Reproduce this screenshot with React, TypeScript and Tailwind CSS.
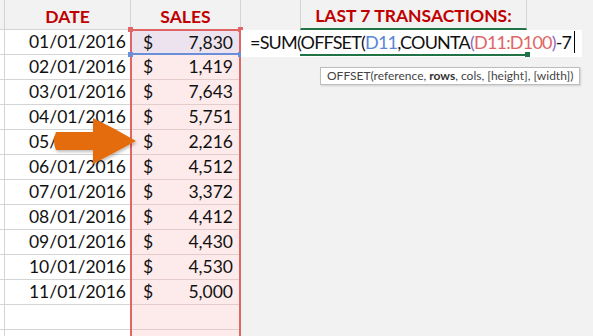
import clsx from 'clsx'

const rows = [
  { date: '01/01/2016', sales: '7,830' },
  { date: '02/01/2016', sales: '1,419' },
  { date: '03/01/2016', sales: '7,643' },
  { date: '04/01/2016', sales: '5,751' },
  { date: '05/01/2016', sales: '2,216' },
  { date: '06/01/2016', sales: '4,512' },
  { date: '07/01/2016', sales: '3,372' },
  { date: '08/01/2016', sales: '4,412' },
  { date: '09/01/2016', sales: '4,430' },
  { date: '10/01/2016', sales: '4,530' },
  { date: '11/01/2016', sales: '5,000' },
  { date: '', sales: '' },
  { date: '', sales: '' },
]

const Arrow = () => (
  <svg className="absolute left-0 top-[110px]" width="150" height="64" viewBox="0 110 150 64">
    <defs>
      <filter id="sh" x="-10%" y="-10%" width="130%" height="140%">
        <feDropShadow dx="1" dy="2" stdDeviation="1.5" floodColor="#000" floodOpacity="0.25" />
      </filter>
    </defs>
    <path
      d="M56,132 L93,132 L93,118 Q114,128 136,141 Q114,153 93,164 L93,150 L56,150 Q52,141 56,132 Z"
      fill="#e46c0a"
      filter="url(#sh)"
    />
  </svg>
)

const App = () => {
  return (
    <div className="relative flex w-[593px] h-[336px] overflow-hidden bg-[#f2f2f2] font-['Lato',sans-serif] text-[17.5px] text-[#111]">
      {/* row header edge */}
      <div className="w-[5px] shrink-0 flex flex-col border-r border-[#d4d4d4]">
        <div className="h-[30px] shrink-0 border-b border-[#d4d4d4]" />
        {rows.map((_, i) => (
          <div key={i} className="h-[25px] shrink-0 bg-white border-b border-[#d4d4d4]" />
        ))}
      </div>

      {/* date column */}
      <div className="w-[125px] shrink-0 flex flex-col">
        <div className="h-[30px] shrink-0 border-b border-[#d4d4d4] flex items-center justify-center font-bold text-[#c00000] pt-[5px]">
          DATE
        </div>
        {rows.map((r, i) => (
          <div
            key={i}
            className="h-[25px] shrink-0 bg-white border-b border-[#d4d4d4] text-right pr-[4px] leading-[24px]"
          >
            {r.date}
          </div>
        ))}
      </div>

      {/* sales column */}
      <div className="w-[111px] shrink-0 flex flex-col">
        <div className="h-[29px] shrink-0 border-x border-[#d4d4d4] flex items-center justify-center font-bold text-[#c00000] pt-[6px]">
          SALES
        </div>
        <div className="relative flex-1 border-x-2 border-t-2 border-[#e06666] bg-[#fdeaea]">
          {rows.map((r, i) => (
            <div
              key={i}
              className={clsx(
                'flex justify-between pl-[11px] pr-[6px] leading-[24px]',
                i === 0 ? 'h-[24px] bg-[#ece3ee] border-b-2 border-[#6a8ed8] leading-[22px]' : 'h-[25px] border-b border-[#e5cccc]',
              )}
            >
              <span>{r.sales ? '$' : ''}</span>
              <span>{r.sales}</span>
            </div>
          ))}
          <div className="absolute -left-[4px] -top-[4px] w-[5px] h-[5px] bg-[#e06666]" />
          <div className="absolute -right-[4px] -top-[4px] w-[5px] h-[5px] bg-[#e06666]" />
          <div className="absolute -left-[4px] top-[21px] w-[5px] h-[5px] bg-[#6a8ed8]" />
          <div className="absolute -right-[4px] top-[21px] w-[5px] h-[5px] bg-[#6a8ed8]" />
        </div>
      </div>

      {/* right area */}
      <div className="relative flex-1 flex flex-col">
        <div className="h-[30px] shrink-0 flex">
          <div className="ml-[59px] w-[227px] h-[30px] border-x border-[#d4d4d4] border-b-2 border-b-[#217346] flex items-center justify-center font-bold text-[#c00000] pt-[4px]">
            LAST 7 TRANSACTIONS:
          </div>
        </div>
        <div className="relative w-[341px] h-[27px] bg-white flex items-center pl-[9px] text-[18px] tracking-[-0.8px] leading-none pb-[3px]">
          <span className="text-[#111]">=SUM(OFFSET(</span>
          <span className="text-[#5b86d6]">D11</span>
          <span className="text-[#111]">,COUNTA</span>
          <span className="text-[#9169c0]">(</span>
          <span className="text-[#e06666]">D11:D100</span>
          <span className="text-[#9169c0]">)</span>
          <span className="text-[#111]">-7</span>
          <span className="ml-[3px] w-[1px] h-[22px] bg-black" />
          <div className="absolute left-[59px] top-[24px] w-[227px] h-[2px] bg-[#217346]" />
          <div className="absolute left-[284px] top-[22px] w-[5px] h-[5px] bg-[#217346]" />
        </div>
        <div className="absolute left-[79px] top-[67px] h-[18px] px-[6px] bg-white border border-[#bdbdbd] shadow-[1px_1px_2px_rgba(0,0,0,0.15)] flex items-center text-[12px] text-[#444] whitespace-nowrap leading-none">
          OFFSET(reference,&nbsp;<b className="font-bold text-[#333]">rows</b>, cols, [height], [width])
        </div>
      </div>

      <Arrow />
    </div>
  )
}

export default App
